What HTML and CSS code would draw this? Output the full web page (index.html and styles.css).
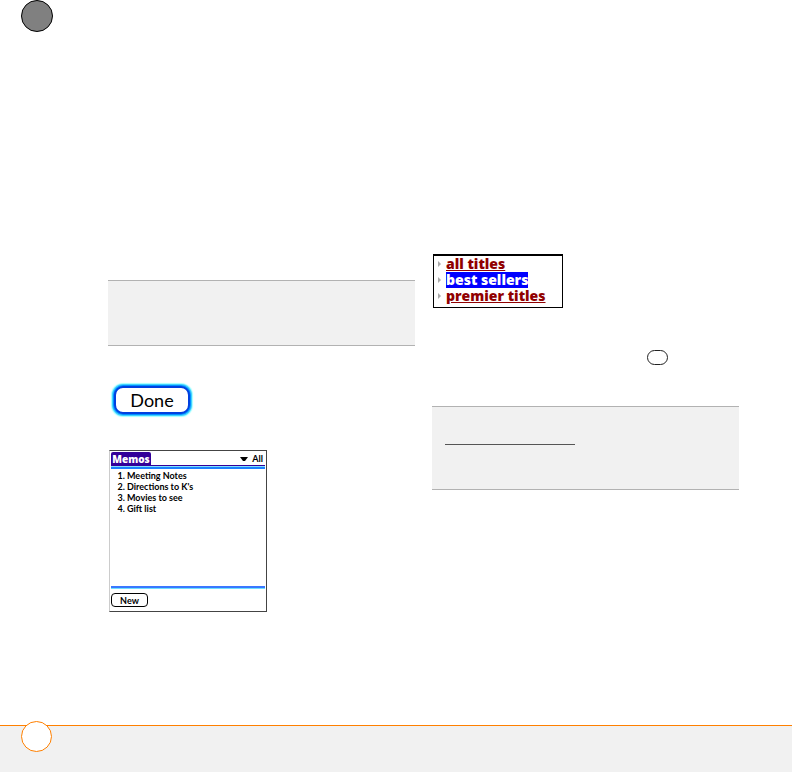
FILE: index.html
```
<!DOCTYPE html>
<html lang="en">
<head>
    <meta charset="UTF-8">
    <meta name="viewport" content="width=device-width, initial-scale=1.0">
    <title>Memos</title>
    <link rel="stylesheet" href="styles.css">
</head>
<body>

    <!-- Header -->
    <header class="header">
        <div class="chapter-dot"></div>
    </header>

    <!-- Main Content -->
    <main class="container">
        <section class="column left">
            <div class="note"></div>

            <button class="done-btn" type="button">Done</button>

            <!-- Memo list -->
            <div class="memo">
                <div class="memo-header">
                    <h1>Memos</h1>
                    <button class="category" type="button">
                        <svg width="8" height="4" viewBox="0 0 8 4"><path d="M0 0h8L5 4H3z"/></svg>
                        All
                    </button>
                </div>
                <ol class="memo-list">
                    <li>Meeting Notes</li>
                    <li>Directions to K's</li>
                    <li>Movies to see</li>
                    <li>Gift list</li>
                </ol>
                <div class="memo-footer">
                    <button class="new-btn" type="button">New</button>
                </div>
            </div>
        </section>

        <section class="column right">
            <!-- Links -->
            <ul class="titles">
                <li><a href="#all">all titles</a></li>
                <li><a class="selected" href="#best">best sellers</a></li>
                <li><a href="#premier">premier titles</a></li>
            </ul>

            <div class="key"></div>

            <div class="note tall">
                <div class="rule"></div>
            </div>
        </section>
    </main>

    <!-- Footer -->
    <footer class="footer">
        <div class="page-dot"></div>
    </footer>

</body>
</html>
```
FILE: styles.css
```
/* Global Styles */
* {
    margin: 0;
    padding: 0;
    box-sizing: border-box;
}

body {
    display: flex;
    flex-direction: column;
    min-height: 100vh;
    background: white;
    color: black;
    font-family: Lato, "Open Sans", sans-serif;
}

button {
    font-family: inherit;
    color: black;
    cursor: pointer;
}

/* Header */
.header {
    padding: 0 21px;
}

.chapter-dot {
    width: 32px;
    height: 32px;
    background: #808080;
    border: 1px solid black;
    border-radius: 50%;
}

/* Main Container */
.container {
    flex: 1;
    display: grid;
    grid-template-columns: 1fr 1fr;
    gap: 17px;
    padding: 0 53px 0 108px;
}

.column {
    display: flex;
    flex-direction: column;
    align-items: flex-start;
}

.left {
    padding-top: 248px;
}

.right {
    padding-top: 222px;
}

/* Notes */
.note {
    width: 100%;
    height: 66px;
    background: #f1f1f1;
    border-top: 1px solid #b2b2b2;
    border-bottom: 1px solid #b2b2b2;
}

.note.tall {
    height: 84px;
    padding: 37px 13px;
}

.rule {
    width: 130px;
    border-top: 1px solid #555;
}

/* Done Button */
.done-btn {
    width: 76px;
    height: 28px;
    margin: 40px 0 0 6px;
    background: white;
    border: 2px solid #0040e0;
    border-radius: 9px;
    box-shadow: 0 0 0 1px #0090ff, 0 0 0 2px #40d0ff, 0 0 1px 3px #a0ffff;
    font-size: 18px;
    line-height: 22px;
}

/* Memo */
.memo {
    display: flex;
    flex-direction: column;
    width: 158px;
    height: 162px;
    margin: 36px 0 0 1px;
    padding: 1px;
    border: 1px solid #444;
    border-left-color: #ccc;
    font-size: 9px;
    font-weight: 700;
}

.memo-header {
    display: flex;
    justify-content: space-between;
    height: 14px;
    border-bottom: 1px solid #330099;
}

.memo-header h1 {
    width: 40px;
    height: 13px;
    background: #330099;
    border-radius: 2px 2px 0 0;
    color: white;
    font-family: "Open Sans", sans-serif;
    font-size: 10px;
    font-weight: 800;
    line-height: 15px;
    text-align: center;
}

.category {
    display: flex;
    align-items: center;
    gap: 4px;
    height: 13px;
    padding-right: 2px;
    background: none;
    border: none;
    font-size: 9px;
    font-weight: 700;
}

.memo-list {
    flex: 1;
    padding: 0 0 0 16px;
    border-top: 1px solid #80e0ff;
    box-shadow: inset 0 2px #1a80ff;
    padding-top: 3px;
    line-height: 11px;
}

.memo-footer {
    height: 24px;
    padding-top: 5px;
    border-top: 2px solid #3a78ff;
    box-shadow: inset 0 1px #70e0ff;
}

.new-btn {
    width: 37px;
    height: 14px;
    background: white;
    border: 1px solid black;
    border-radius: 4px;
    font-size: 9px;
    font-weight: 700;
    line-height: 11px;
}

/* Titles */
.titles {
    width: 130px;
    margin-left: 1px;
    padding: 0 0 3px 4px;
    border: 1px solid black;
    border-top-width: 2px;
    list-style: none;
    font-family: "Open Sans", sans-serif;
    font-size: 14px;
    font-weight: 800;
    line-height: 16px;
}

.titles li {
    display: flex;
    align-items: center;
    gap: 5px;
}

.titles li::before {
    content: "";
    border: 3px solid transparent;
    border-left-color: #aaa;
    border-right: none;
}

.titles a {
    color: #900000;
    text-decoration-thickness: 1px;
}

.titles .selected {
    background: #0000ff;
    color: white;
    text-decoration: none;
}

/* Key */
.key {
    align-self: flex-end;
    width: 21px;
    height: 15px;
    margin: 42px 71px 41px 0;
    border: 1px solid #222;
    border-radius: 8px;
}

/* Footer */
.footer {
    height: 47px;
    padding: 0 21px;
    background: #f1f1f1;
    border-top: 1px solid #ff8000;
}

.page-dot {
    width: 31px;
    height: 31px;
    margin-top: -5px;
    background: white;
    border: 1px solid #ff8000;
    border-radius: 50%;
}
```
